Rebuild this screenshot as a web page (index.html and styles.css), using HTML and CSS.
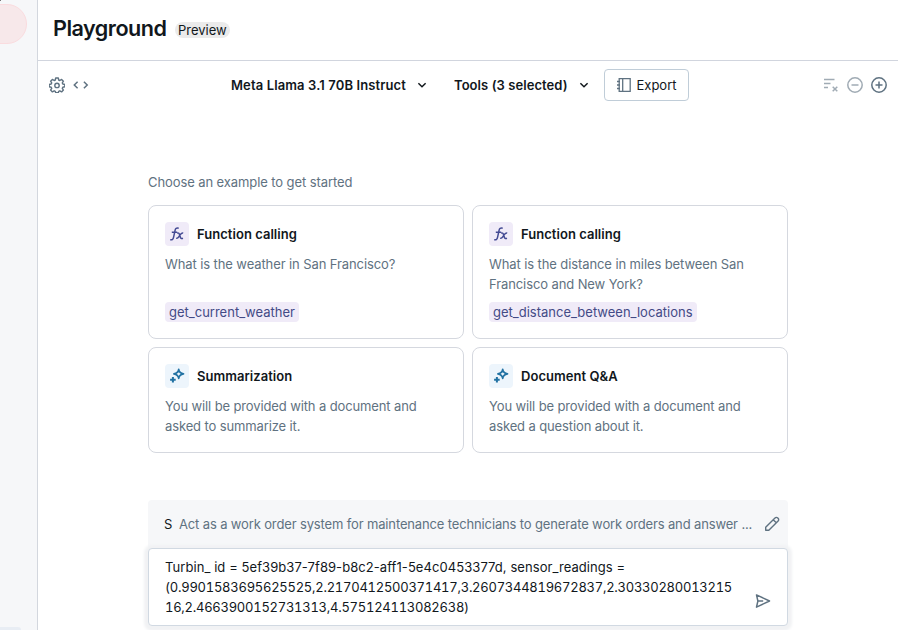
FILE: index.html
```html
<!DOCTYPE html>
<html lang="en">
<head>
<meta charset="utf-8">
<title>Playground</title>
<link rel="stylesheet" href="styles.css">
</head>
<body>
<svg class="defs" aria-hidden="true">
  <symbol id="fx" viewBox="0 0 16 16" fill="none" stroke="currentColor" stroke-width="1.500"><path d="M1.200 13.600c2 .7 2.900-.2 3.400-2.500L6 4.600C6.400 2.500 7.400 1.600 9.700 2.300M2.800 6.300h5.400M8.200 7.200c1.500-.6 2 .2 2.400 1.600l.6 2c.4 1.500 1.100 2.100 2.800 1.500M14.200 7c-1.300-.3-1.900.3-2.800 1.500l-1.500 2.200c-.8 1.200-1.500 1.800-2.700 1.500"/></symbol>
  <symbol id="sparkle" viewBox="0 0 16 16"><path fill="none" stroke="currentColor" stroke-width="1.700" stroke-linejoin="round" d="M9.700 1.400Q10.300 5.300 14.500 5.900Q10.300 6.500 9.700 10.400Q9.100 6.500 4.900 5.900Q9.100 5.300 9.700 1.400Z"/><path fill="none" stroke="currentColor" stroke-width="2" d="M3.900 9v5.600M1.100 11.800h5.600"/></symbol>
  <symbol id="chevron" viewBox="0 0 16 16"><path fill="none" stroke="currentColor" stroke-width="1.500" d="M4.400 6.300 8 9.700l3.600-3.400"/></symbol>
</svg>
<div class="app">
  <aside class="sidebar"><div class="avatar"></div><span class="corner"></span><span class="nav-edge"></span></aside>
  <main class="main">
    <header class="header"><h1>Playground</h1><span class="badge">Preview</span></header>
    <div class="toolbar">
      <div class="left">
        <svg width="16" height="16" viewBox="0 0 16 16" fill="none" stroke="currentColor" stroke-width="1.400" stroke-linejoin="round"><path d="M6.700 1h2.600l.4 2 1.100.5 1.800-1.100 1.800 1.800-1.100 1.700.5 1.100 2 .5v2.300l-2 .5-.5 1.100 1.100 1.700-1.800 1.800-1.800-1.100-1.100.5-.4 1.500H6.700l-.4-1.500-1.100-.5-1.800 1.100-1.800-1.800 1.100-1.700-.5-1.100-2-.5V7.500l2-.5.5-1.100L1.600 4.200l1.800-1.800 1.800 1.100L6.300 3z"/><circle cx="8" cy="8.400" r="2.200"/></svg>
        <svg width="16" height="16" viewBox="0 0 16 16" fill="none" stroke="currentColor" stroke-width="1.500"><path d="M4.600 4.800 1.300 8l3.300 3.200M10.900 4.800 14.200 8l-3.300 3.200"/></svg>
      </div>
      <button class="select model"><span>Meta Llama 3.1 70B Instruct</span><svg width="16" height="16"><use href="#chevron"/></svg></button>
      <button class="select tools"><span>Tools (3 selected)</span><svg width="16" height="16"><use href="#chevron"/></svg></button>
      <button class="export"><svg width="16" height="16" viewBox="0 0 16 16" fill="none" stroke="currentColor" stroke-width="1.300"><path d="M3.200 1.700h11v12.600h-11zM6.700 1.700v12.600M1 4.500h3M1 8h3M1 11.500h3"/></svg><span>Export</span></button>
      <div class="actions">
        <svg class="dim" width="16" height="16" viewBox="0 0 16 16" fill="none" stroke="currentColor" stroke-width="1.500"><path d="M1 2.500h10.500M1 6.500h6.500M1 10.500h4M9.700 9.700l4.600 4.600M14.300 9.700l-4.600 4.600"/></svg>
        <svg class="dim" width="16" height="16" viewBox="0 0 16 16" fill="none" stroke="currentColor" stroke-width="1.500"><circle cx="8" cy="8" r="7.200"/><path d="M4.500 8h7"/></svg>
        <svg width="16" height="16" viewBox="0 0 16 16" fill="none" stroke="currentColor" stroke-width="1.500"><circle cx="8" cy="8" r="7.200"/><path d="M4.500 8h7M8 4.500v7"/></svg>
      </div>
    </div>
    <div class="content">
      <p class="intro">Choose an example to get started</p>
      <div class="cards">
        <article class="card tall"><h2><span class="icon purple"><svg width="16" height="16"><use href="#fx"/></svg></span><span>Function calling</span></h2><p>What is the weather in San Francisco?</p><code>get_current_weather</code></article>
        <article class="card tall"><h2><span class="icon purple"><svg width="16" height="16"><use href="#fx"/></svg></span><span>Function calling</span></h2><p>What is the distance in miles between San<br>Francisco and New York?</p><code>get_distance_between_locations</code></article>
        <article class="card"><h2><span class="icon blue"><svg width="16" height="16"><use href="#sparkle"/></svg></span><span>Summarization</span></h2><p>You will be provided with a document and<br>asked to summarize it.</p></article>
        <article class="card"><h2><span class="icon blue"><svg width="16" height="16"><use href="#sparkle"/></svg></span><span>Document Q&amp;A</span></h2><p>You will be provided with a document and<br>asked a question about it.</p></article>
      </div>
      <div class="composer">
        <div class="system"><span class="role">S</span><span class="prompt">Act as a work order system for maintenance technicians to generate work orders and answer ...</span>
          <svg width="16" height="16" viewBox="0 0 16 16" fill="none" stroke="currentColor" stroke-width="1.400" stroke-linejoin="round"><path d="M1.700 11.200 11 1.900a1.900 1.900 0 0 1 2.700 0l.4.4a1.900 1.900 0 0 1 0 2.700L4.800 14.300H1.700zM9.200 3.700l3.100 3.100"/></svg></div>
        <div class="message"><div class="text"><div class="label">Turbin_ id = 5ef39b37-7f89-b8c2-aff1-5e4c0453377d, sensor_readings =</div><div class="readings">(0.9901583695625525,2.2170412500371417,3.2607344819672837,2.30330280013215<br>16,2.4663900152731313,4.575124113082638)</div></div>
          <svg class="send" width="16" height="16" viewBox="0 0 16 16" fill="none" stroke="currentColor" stroke-width="1.500" stroke-linejoin="round"><path d="M1.500 1.900 14.500 8 1.500 14.100 2.900 8zM2.900 8h5.300"/></svg></div>
      </div>
    </div>
  </main>
</div>
</body>
</html>
```
FILE: styles.css
```css
* { box-sizing: border-box; }
body { margin: 0; font: 13px/20px Inter, "Liberation Sans", sans-serif; color: #11171c; background: #fff; overflow: hidden; }
h1, h2, p { margin: 0; }
button { font: inherit; color: inherit; background: none; border: 0; padding: 0; }
svg { display: block; flex: none; }
.defs { position: absolute; width: 0; height: 0; }
.app { display: flex; height: 630px; }
.sidebar { position: relative; flex: none; width: 38px; background: #f6f7f9; border-right: 1px solid #d3d7de; overflow: hidden; }
.avatar { width: 67px; height: 40px; margin: 4px 0 0 -40px; border: 1px solid #fadcdf; border-radius: 20px; background: #f7e8ea; }
.corner { position: absolute; left: -1px; top: -1px; width: 2px; height: 2px; background: #777; }
.nav-edge { position: absolute; left: 0; bottom: 0; width: 21px; height: 3px; border-radius: 0 4px 0 0; background: #e8edf4; }
.main { flex: 1; min-width: 0; }
.header { display: flex; height: 61px; padding: 14px 15px; border-bottom: 1px solid #d1d5de; }
h1 { width: 113px; font-size: 21.6px; line-height: 28px; font-weight: 600; white-space: nowrap; letter-spacing: -.52px; }
.badge { height: 16px; margin: 8px 0 0 9px; padding: 0 3px; border-radius: 8px; background: #ebebeb; line-height: 17px; }
.toolbar { display: flex; align-items: center; height: 48px; padding: 0 11px; color: #5f7281; }
.left { display: flex; gap: 8px; width: 182px; }
.select { display: flex; align-items: center; gap: 8px; color: #11171c; font-weight: 600; white-space: nowrap; }
.model { width: 223px; letter-spacing: .12px; }
.tools { width: 150px; letter-spacing: .07px; }
.export { display: flex; align-items: center; justify-content: center; gap: 4px; width: 85px; height: 32px; border: 1px solid #c0cdd8; border-radius: 4px; }
.export span { color: #11171c; }
.actions { display: flex; gap: 8px; margin-left: auto; }
.dim { color: #a0abb4; }
.content { width: 640px; margin: 63px 0 0 110px; }
.intro { color: #5f7281; letter-spacing: -.09px; }
.cards { display: grid; grid-template-columns: 316px 316px; gap: 8px; margin-top: 13px; }
.card { height: 106px; padding: 16px; border: 1px solid #d5d8df; border-radius: 8px; white-space: nowrap; }
.tall { height: 134px; }
h2 { display: flex; align-items: center; gap: 8px; height: 24px; font-size: 13px; font-weight: 600; letter-spacing: .04px; }
.icon { display: grid; place-items: center; width: 24px; height: 24px; border-radius: 4px; }
.purple { color: #434a93; background: #f0ebf8; }
.blue { color: #2272a3; background: #edf5fc; }
.card p { margin-top: 8px; color: #5f7281; letter-spacing: -.12px; }
.tall p { height: 40px; letter-spacing: -.1px; }
code { display: block; width: max-content; height: 20px; margin-top: 8px; padding: 0 4px; border-radius: 4px; font: inherit; color: #434a86; background: #f0ebf8; }
.composer { margin-top: 47px; }
.system { display: flex; align-items: center; height: 48px; padding: 0 8px 0 16px; border-radius: 4px 4px 0 0; background: #f6f7f9; color: #5f7281; white-space: nowrap; }
.role { flex: none; width: 15px; color: #11171c; }
.prompt { letter-spacing: -.14px; }
.system svg { margin-left: auto; }
.message { position: relative; display: flex; height: 78px; padding: 8px 16px; border: 1px solid #d1d9e2; border-radius: 4px; background: #fff; box-shadow: 0 1px 3px 4px #f1f2f4; white-space: nowrap; }
.send { margin: 36px 0 0 auto; color: #5f7281; }
.text { width: 586px; }
.label { letter-spacing: .07px; }
.readings { font-variant-numeric: tabular-nums; letter-spacing: -.255px; }
```
